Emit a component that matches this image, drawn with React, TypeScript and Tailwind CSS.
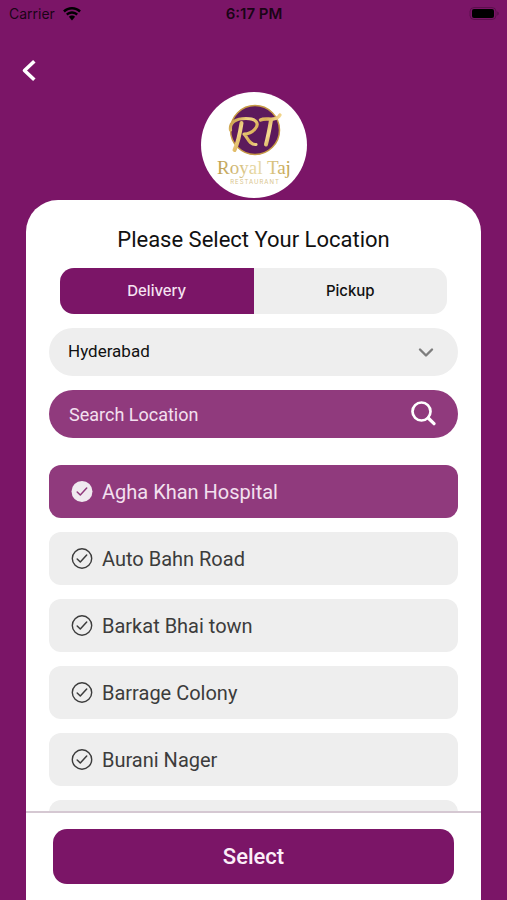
import { useState } from "react";

const locations = [
  "Agha Khan Hospital",
  "Auto Bahn Road",
  "Barkat Bhai town",
  "Barrage Colony",
  "Burani Nager",
];

const modes = ["Delivery", "Pickup"];

function StatusBar() {
  return (
    <div className="grid h-7 grid-cols-3 items-center pr-2 pl-[9px] font-['Inter',sans-serif] text-sm text-black/80">
      <div className="flex items-center gap-2">
        <span>Carrier</span>
        <svg viewBox="0 0 18 14" className="h-[14px] w-[18px]" fill="black" aria-hidden="true">
          <path d="M9 0C5.500 0 2.400 1.400.1 3.600l1.700 1.800C3.700 3.600 6.200 2.500 9 2.500s5.300 1.100 7.200 2.900l1.700-1.800C15.600 1.400 12.500 0 9 0Z" />
          <path d="M9 4.300c-2.300 0-4.400.9-6 2.400l1.700 1.800C5.800 7.400 7.300 6.700 9 6.700s3.200.7 4.300 1.800L15 6.700c-1.600-1.500-3.700-2.400-6-2.400Z" />
          <path d="M9 8.500c-1.200 0-2.300.5-3.100 1.200L9 13.400l3.100-3.700C11.300 9 10.200 8.500 9 8.500Z" />
        </svg>
      </div>
      <span className="text-center text-[15px] font-semibold">6:17 PM</span>
      <svg viewBox="0 0 30 14" className="h-[14px] w-[30px] justify-self-end" aria-hidden="true">
        <rect x="1" y="0.500" width="26" height="12" rx="4" fill="none" stroke="black" strokeOpacity="0.25" />
        <rect x="3" y="2" width="22" height="9" rx="2" fill="black" />
        <path d="M28.300 4.500c1 .4 1.400 1.100 1.400 2s-.4 1.600-1.400 2Z" fill="black" fillOpacity="0.3" />
      </svg>
    </div>
  );
}

function Logo() {
  return (
    <svg viewBox="0 0 106 106" className="h-[106px] w-[106px]" role="img" aria-label="Royal Taj Restaurant">
      <defs>
        <linearGradient id="gold" gradientUnits="userSpaceOnUse" x1="30" y1="22" x2="74" y2="56">
          <stop offset="0" stopColor="#b98a32" />
          <stop offset="0.3" stopColor="#f1d586" />
          <stop offset="0.55" stopColor="#d9ae57" />
          <stop offset="0.75" stopColor="#f6dc94" />
          <stop offset="1" stopColor="#c08e35" />
        </linearGradient>
        <linearGradient id="goldText" x1="0" y1="0" x2="1" y2="0">
          <stop offset="0" stopColor="#bd9d4e" />
          <stop offset="0.55" stopColor="#eadcaa" />
          <stop offset="1" stopColor="#c2a047" />
        </linearGradient>
      </defs>
      <circle cx="53" cy="53" r="53" fill="white" />
      <circle cx="54" cy="38" r="24.500" fill="#5c1a5c" stroke="#c79a45" strokeWidth="1.500" />
      <g fill="none" stroke="url(#gold)" strokeLinecap="round" strokeLinejoin="round">
        <path d="M40.500 31C39 41 37.500 50 33.500 58" strokeWidth="4" />
        <path d="M29.500 38C28.500 30 35 26.500 45 26.500C56 26.500 58.500 32 54 37C51 40.500 47 42 43 42C46.500 45 48 53 55 52.500" strokeWidth="3.200" />
        <path d="M59.500 28C63 26 68 27.500 72 27C76 26.500 78 25 79 23" strokeWidth="3.400" />
        <path d="M70 28C68.500 37 67 45 65 52.500" strokeWidth="4" />
      </g>
      <text x="53" y="82" textAnchor="middle" fontSize="19" fontFamily="Liberation Serif, serif" fill="url(#goldText)">
        Royal Taj
      </text>
      <text x="54" y="92" textAnchor="middle" fontSize="6" fontFamily="Inter, sans-serif" letterSpacing="1" fill="#d8c48c">
        RESTAURANT
      </text>
    </svg>
  );
}

function CheckCircle({ filled }: { filled: boolean }) {
  return (
    <svg viewBox="0 0 22 22" className="h-[22px] w-[22px] shrink-0" fill="none" aria-hidden="true">
      {filled ? (
        <circle cx="11" cy="10.500" r="10.500" fill="#f0eaf0" />
      ) : (
        <circle cx="11" cy="10.500" r="9.700" stroke="#3c3c3c" strokeWidth="1.400" />
      )}
      <path d="M6.200 11 9.300 14 15.700 7" stroke={filled ? "#903a7d" : "#3c3c3c"} strokeWidth="1.500" strokeLinecap="round" strokeLinejoin="round" />
    </svg>
  );
}

export default function App() {
  const [mode, setMode] = useState("Delivery");
  const [selected, setSelected] = useState(locations[0]);

  return (
    <div className="flex h-screen flex-col bg-[#7b1567] font-['Roboto',sans-serif]">
      <StatusBar />

      <header className="flex flex-col px-[18px]">
        <button type="button" aria-label="Back" className="mt-[30px] h-6 w-6 self-start">
          <svg viewBox="0 0 24 24" className="h-6 w-6" fill="none" stroke="white" strokeWidth="3.600" strokeLinecap="square" strokeLinejoin="round">
            <path d="M15 4.500 6.500 12.500 15 20.500" />
          </svg>
        </button>
        <div className="mt-[10px] mb-[2px] self-center">
          <Logo />
        </div>
      </header>

      <main className="mx-[26px] flex min-h-0 flex-1 flex-col overflow-hidden rounded-t-[32px] bg-white">
        <h1 className="pt-[26px] text-center text-[22px] leading-7 text-[#111111]">Please Select Your Location</h1>

        <div className="mx-[34px] mt-[14px] flex overflow-hidden rounded-[14px] bg-[#eeeeee]">
          {modes.map((m) => (
            <button
              key={m}
              type="button"
              aria-pressed={mode === m}
              onClick={() => setMode(m)}
              className={`h-[46px] flex-1 font-['Inter',sans-serif] text-[15px] font-medium ${mode === m ? "bg-[#7b1567] text-[#f6e3f2]" : "text-[#111111]"}`}
            >
              {m}
            </button>
          ))}
        </div>

        <div className="relative mx-[23px] mt-[14px]">
          <select aria-label="City" className="h-12 w-full appearance-none rounded-full bg-[#eeeeee] pr-12 pl-[19px] text-[17px] text-[#111111]">
            <option>Hyderabad</option>
          </select>
          <svg viewBox="0 0 16 16" className="pointer-events-none absolute top-4 right-6 h-4 w-4" fill="none" stroke="#7d7d7d" strokeWidth="2.400" strokeLinecap="round" strokeLinejoin="round" aria-hidden="true">
            <path d="M2 5.500 8 11.500 14 5.500" />
          </svg>
        </div>

        <div className="mx-[23px] mt-[14px] flex h-12 items-center rounded-full bg-[#903a7d] pr-[22px] pl-5">
          <input
            type="text"
            aria-label="Search Location"
            placeholder="Search Location"
            className="min-w-0 flex-1 bg-transparent text-[18px] text-white outline-none placeholder:text-[#f3e0ef]"
          />
          <svg viewBox="0 0 26 26" className="h-[26px] w-[26px]" fill="none" stroke="white" strokeWidth="2.700" strokeLinecap="round" aria-hidden="true">
            <circle cx="11.500" cy="10.500" r="9" />
            <path d="M18.200 17 24 22.700" strokeWidth="3.200" />
          </svg>
        </div>

        <div className="mx-[23px] mt-[27px] flex min-h-0 flex-1 flex-col gap-[14px] overflow-hidden">
          {locations.map((name) => {
            const active = name === selected;
            return (
              <label
                key={name}
                className={`flex h-[53px] shrink-0 items-center gap-[9px] rounded-xl pl-[22px] text-[20px] ${active ? "bg-[#903a7d] text-[#f3e0ef]" : "bg-[#eeeeee] text-[#3c3c3c]"}`}
              >
                <input type="radio" name="location" className="sr-only" checked={active} onChange={() => setSelected(name)} />
                <CheckCircle filled={active} />
                {name}
              </label>
            );
          })}
          <div className="h-[53px] shrink-0 rounded-xl bg-[#eeeeee]" />
        </div>

        <footer className="border-t-2 border-[#d5c8d2] px-[27px] pt-4 pb-4">
          <button type="button" className="h-[55px] w-full rounded-[14px] bg-[#7b1567] text-[22px] font-medium text-[#fbeef8]">
            Select
          </button>
        </footer>
      </main>
    </div>
  );
}
